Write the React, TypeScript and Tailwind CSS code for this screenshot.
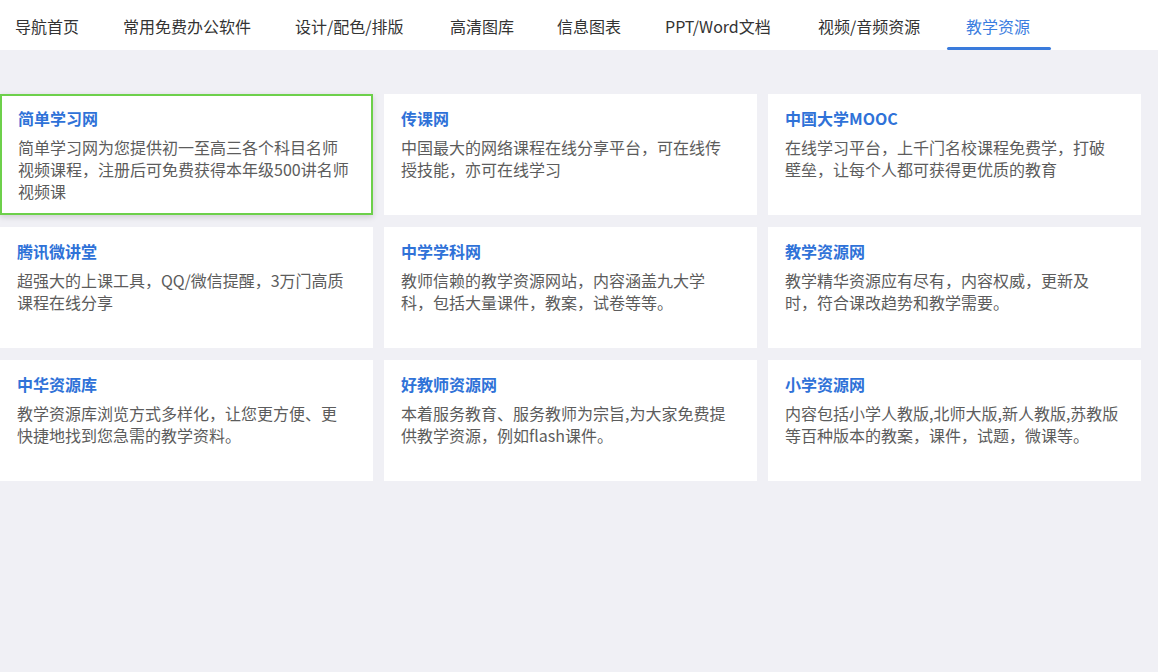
import React from "react";

const navItems: { label: string; w: string }[] = [
  { label: "导航首页", w: "w-[108px]" },
  { label: "常用免费办公软件", w: "w-[172px]" },
  { label: "设计/配色/排版", w: "w-[155px]" },
  { label: "高清图库", w: "w-[107px]" },
  { label: "信息图表", w: "w-[108px]" },
  { label: "PPT/Word文档", w: "w-[153px]" },
  { label: "视频/音频资源", w: "w-[148px]" },
  { label: "教学资源", w: "w-[108px]" },
];

const cards: { title: string; lines: string[] }[] = [
  { title: "简单学习网", lines: ["简单学习网为您提供初一至高三各个科目名师", "视频课程，注册后可免费获得本年级500讲名师", "视频课"] },
  { title: "传课网", lines: ["中国最大的网络课程在线分享平台，可在线传", "授技能，亦可在线学习"] },
  { title: "中国大学MOOC", lines: ["在线学习平台，上千门名校课程免费学，打破", "壁垒，让每个人都可获得更优质的教育"] },
  { title: "腾讯微讲堂", lines: ["超强大的上课工具，QQ/微信提醒，3万门高质", "课程在线分享"] },
  { title: "中学学科网", lines: ["教师信赖的教学资源网站，内容涵盖九大学", "科，包括大量课件，教案，试卷等等。"] },
  { title: "教学资源网", lines: ["教学精华资源应有尽有，内容权威，更新及", "时，符合课改趋势和教学需要。"] },
  { title: "中华资源库", lines: ["教学资源库浏览方式多样化，让您更方便、更", "快捷地找到您急需的教学资料。"] },
  { title: "好教师资源网", lines: ["本着服务教育、服务教师为宗旨,为大家免费提", "供教学资源，例如flash课件。"] },
  { title: "小学资源网", lines: ["内容包括小学人教版,北师大版,新人教版,苏教版", "等百种版本的教案，课件，试题，微课等。"] },
];

export default function App() {
  return (
    <div
      className="w-[1158px] h-[672px] bg-[#f0f0f5] overflow-hidden"
      style={{ fontFamily: '"Noto Sans CJK SC", "Noto Sans", sans-serif' }}
    >
      <div className="h-[50px] bg-white flex items-stretch">
        <div className="flex items-stretch ml-[-6px]">
          {navItems.map((item, i) => {
            const active = i === navItems.length - 1;
            return (
              <div
                key={item.label}
                className={`relative ${item.w} pl-[21px] flex items-center text-[16px] leading-none whitespace-nowrap ${
                  active ? "text-[#3b7de0]" : "text-[#333333]"
                }`}
              >
                <span className="mt-[1px]">{item.label}</span>
                {active && (
                  <div className="absolute left-[2px] w-[104px] bottom-0 h-[3px] bg-[#3a7bdc] rounded-full" />
                )}
              </div>
            );
          })}
        </div>
      </div>
      <div className="pt-[44px]">
        <div className="w-[1141px] grid grid-cols-3 gap-x-[11px] gap-y-[12px]">
          {cards.map((c, i) => (
            <div
              key={c.title}
              className={`h-[121px] bg-white ${
                i === 0
                  ? "border-2 border-[#6dd04b] shadow-[0_2px_6px_rgba(0,0,0,0.15)] pl-[16px] pt-[10px]"
                  : "pl-[17px] pt-[12px]"
              }`}
            >
              <div className="text-[16px] leading-[24px] font-bold text-[#2f72d8]">{c.title}</div>
              <div className="mt-[6px] text-[16px] leading-[22px] text-[#5c5c5c]">
                {c.lines.map((l) => (
                  <div key={l} className="whitespace-nowrap">{l}</div>
                ))}
              </div>
            </div>
          ))}
        </div>
      </div>
    </div>
  );
}
